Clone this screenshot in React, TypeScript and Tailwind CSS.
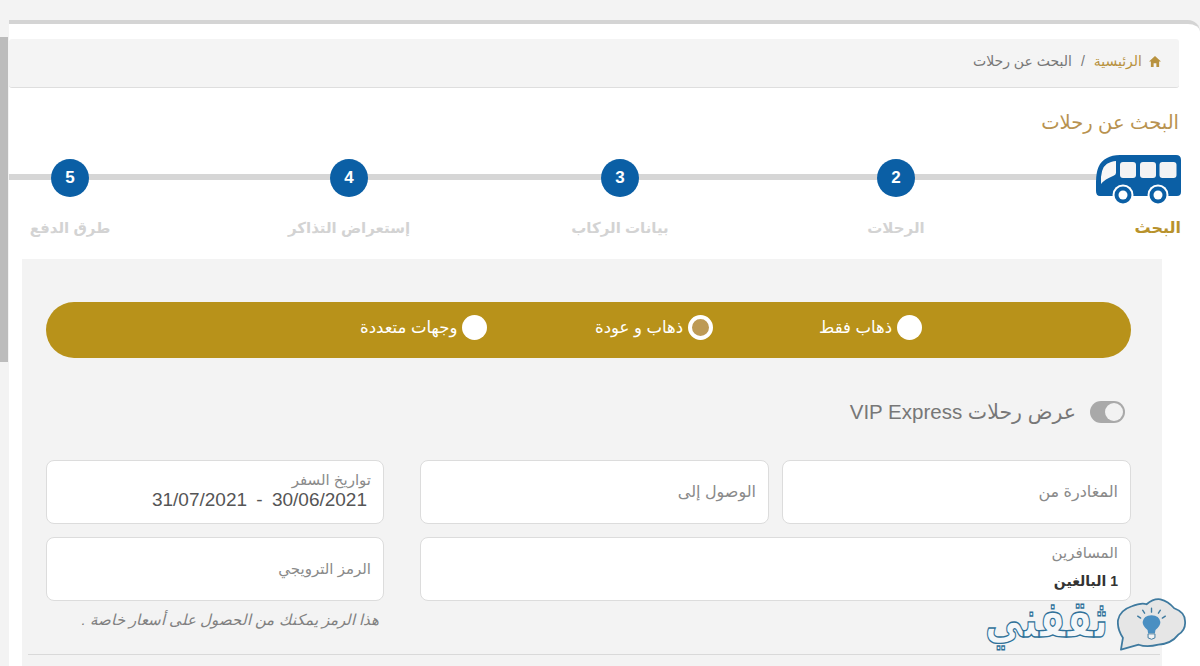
import React from "react";

const F = "font-['Liberation_Sans','Noto_Sans','DejaVu_Sans',sans-serif]";

function Bus() {
  return (
    <svg width="85" height="50" viewBox="0 0 85 50" className="block">
      <path d="M24 0H80Q85 0 85 5V37Q85 41 81 41H4Q0 41 0 36V27Q0 8 11 3Q16 0 24 0Z" fill="#0b5fa5" />
      <path d="M5 29V22Q6 9 15 7Q18 6 20 6V18Q20 20 17 21Q9 24 5 29Z" fill="#f6f6f6" />
      <rect x="24" y="7" width="16" height="16" rx="3" fill="#f3f3f3" />
      <rect x="44" y="7" width="16" height="16" rx="3" fill="#f3f3f3" />
      <rect x="63.500" y="7" width="17" height="16" rx="3" fill="#f3f3f3" />
      <circle cx="27" cy="40" r="10.500" fill="#fff" />
      <circle cx="27" cy="40" r="8.500" fill="#0b5fa5" />
      <circle cx="27" cy="40" r="4.500" fill="#fff" />
      <circle cx="62" cy="40" r="10.500" fill="#fff" />
      <circle cx="62" cy="40" r="8.500" fill="#0b5fa5" />
      <circle cx="62" cy="40" r="4.500" fill="#fff" />
    </svg>
  );
}

function Step({ n, label, cls }: { n: string; label: string; cls: string }) {
  return (
    <div className={`flex flex-col items-center ${cls}`}>
      <div className="h-[50px] pt-[4px]">
        <div className="w-[38px] h-[38px] rounded-full bg-[#0b5fa5] text-white font-bold text-[17px] flex items-center justify-center">
          {n}
        </div>
      </div>
      <div dir="rtl" className="mt-[14px] h-[18px] leading-[18px] text-[15px] font-bold text-[#d3d3d3] whitespace-nowrap">
        {label}
      </div>
    </div>
  );
}

function Radio({ label, on, cls }: { label: string; on?: boolean; cls: string }) {
  return (
    <div className={`flex items-center gap-[5px] ${cls}`}>
      <span className={`w-[25px] h-[25px] rounded-full shrink-0 ${on ? "bg-[#bd9a55] border-[4px] border-white" : "bg-white"}`} />
      <span className="text-white text-[16.5px] leading-[20px] whitespace-nowrap">{label}</span>
    </div>
  );
}

function Field({ label, cls, labelCls, children }: { label: string; cls?: string; labelCls?: string; children?: React.ReactNode }) {
  return (
    <div className={`h-[64px] bg-white border border-[#dcdcdc] rounded-[8px] px-[12px] flex flex-col justify-center ${cls ?? ""}`}>
      <div className={`leading-[18px] text-[#8a8a8a] ${labelCls ?? "text-[15px]"}`}>{label}</div>
      {children}
    </div>
  );
}

function Logo() {
  return (
    <div className="absolute left-[985px] top-[598px] flex items-center gap-[9px]" dir="ltr">
      <span
        dir="rtl"
        className="text-[38px] leading-[48px] font-bold text-[#f4f7f9] [-webkit-text-stroke:1px_#2f7199] whitespace-nowrap scale-y-[1.35] -translate-y-[6px]"
      >
        ثقفني
      </span>
      <svg width="70" height="54" viewBox="0 0 71 54" className="block">
        <path
          d="M4 52L6 40Q0 31 1 22Q3 12 15 8Q25 4 30 6Q37 0 44 1Q52 3 58 10Q69 14 69 23Q70 32 62 37Q55 46 42 47Q30 50 22 47Z"
          fill="#e6e6e6"
          stroke="#3f7a9f"
          strokeWidth="1.800"
          strokeLinejoin="round"
        />
        <path d="M31 32Q26 28 26 24Q27 17 35 17Q43 17 44 24Q44 28 39 32L38.500 35H31.500Z" fill="#4a8fc2" />
        <path d="M31.500 36H38.500V40Q35 43 31.500 40Z" fill="#f2f2f2" stroke="#3f7a9f" strokeWidth="1" />
        <path d="M35 10V14M26 12L28 15M44 12L42 15M21 18L24 20M49 18L46 20" stroke="#3f7a9f" strokeWidth="1.400" strokeLinecap="round" />
      </svg>
    </div>
  );
}

export default function App() {
  return (
    <div className={`relative w-[1200px] h-[666px] overflow-hidden bg-[#f3f3f3] flex ${F}`}>
      <div className="w-[9px] shrink-0 pt-[37px]">
        <div className="w-[8px] h-[325px] bg-[#bcbcbc]" />
      </div>
      <div className="flex-1 mt-[20px] border-t-[4px] border-[#d4d4d4] rounded-tr-[12px] bg-white h-[646px] overflow-hidden">
        <div
          dir="rtl"
          className="mt-[15px] mr-[21px] h-[49px] bg-[#f4f4f4] border-b border-[#dedede] rounded-[3px] flex items-center pr-[18px] pb-[4px] text-[14px]"
        >
          <svg width="12" height="11" viewBox="0 0 13 12" className="ml-[7px]" fill="#b8923f">
            <path d="M6.500 0L13 6H11V12H8V8H5V12H2V6H0Z" />
          </svg>
          <span className="text-[#b8923f]">الرئيسية</span>
          <span className="text-[#777] mx-[9px]">/</span>
          <span className="text-[#777]">البحث عن رحلات</span>
        </div>
        <h1 dir="rtl" className="mt-[21px] mr-[21px] h-[26px] leading-[26px] text-[19.5px] font-normal text-[#b8924f]">
          البحث عن رحلات
        </h1>
        <div className="relative mt-[20px] h-[107px] flex">
          <div className="absolute left-0 right-[100px] top-[19px] h-[6px] bg-[#d6d6d6]" />
          <Step n="5" label="طرق الدفع" cls="relative w-[122px]" />
          <Step n="4" label="إستعراض التذاكر" cls="relative w-[160px] ml-[138px]" />
          <Step n="3" label="بيانات الركاب" cls="relative w-[160px] ml-[111px]" />
          <Step n="2" label="الرحلات" cls="relative w-[160px] ml-[116px]" />
          <div className="relative w-[86px] ml-[119px] flex flex-col items-end">
            <Bus />
            <div dir="rtl" className="mt-[14px] h-[18px] leading-[18px] text-[16px] font-bold text-[#b8922c] whitespace-nowrap">
              البحث
            </div>
          </div>
        </div>
        <div className="mt-[-3px] ml-[13px] w-[1140px] h-[407px] bg-[#f3f3f3] px-[24px] pt-[43px]">
          <div dir="ltr" className="w-[1085px] h-[56px] rounded-full bg-[#b8921a] flex items-center pb-[6px]">
            <Radio label="وجهات متعددة" cls="ml-[314px] flex-row-reverse w-[130px] justify-end" />
            <Radio label="ذهاب و عودة" on cls="ml-[105px] flex-row-reverse w-[120px] justify-end" />
            <Radio label="ذهاب فقط" cls="ml-[104px] flex-row-reverse w-[105px] justify-end" />
          </div>
          <div dir="rtl" className="mt-[43px] mr-[13px] h-[22px] flex items-center gap-[14px]">
            <div className="w-[35px] h-[22px] rounded-full bg-[#a9a9a9] flex items-center pr-[2px] justify-start">
              <span className="w-[18px] h-[18px] rounded-full bg-[#f2f2f2]" />
            </div>
            <span className="text-[20.5px] text-[#777] whitespace-nowrap">عرض رحلات VIP Express</span>
          </div>
          <div dir="rtl" className="mt-[37px] w-[1085px] grid grid-cols-[349px_349px_10px_338px] gap-[13px]">
            <Field label="المغادرة من" labelCls="text-[16px]" />
            <Field label="الوصول إلى" labelCls="text-[16px]" />
            <div className="col-start-4">
              <Field label="تواريخ السفر" cls="pb-[3px]">
                <div dir="ltr" className="text-right text-[19px] leading-[22px] [word-spacing:4px] text-[#555] pr-[4px]">
                  31/07/2021 - 30/06/2021
                </div>
              </Field>
            </div>
            <div className="col-span-2">
              <Field label="المسافرين" cls="!justify-start pt-[6px]">
                <div className="mt-[10px] text-[14px] leading-[18px] font-bold text-[#333]">1 البالغين</div>
              </Field>
            </div>
            <div className="col-start-4">
              <Field label="الرمز الترويجي" />
              <div className="mt-[10px] mr-[5px] text-[15px] leading-[18px] italic text-[#808080] whitespace-nowrap">
                هذا الرمز يمكنك من الحصول على أسعار خاصة .
              </div>
            </div>
          </div>
          <div className="mt-[25px] -ml-[18px] w-[1132px] h-[1px] bg-[#d9d9d9]" />
        </div>
      </div>
      <Logo />
    </div>
  );
}
